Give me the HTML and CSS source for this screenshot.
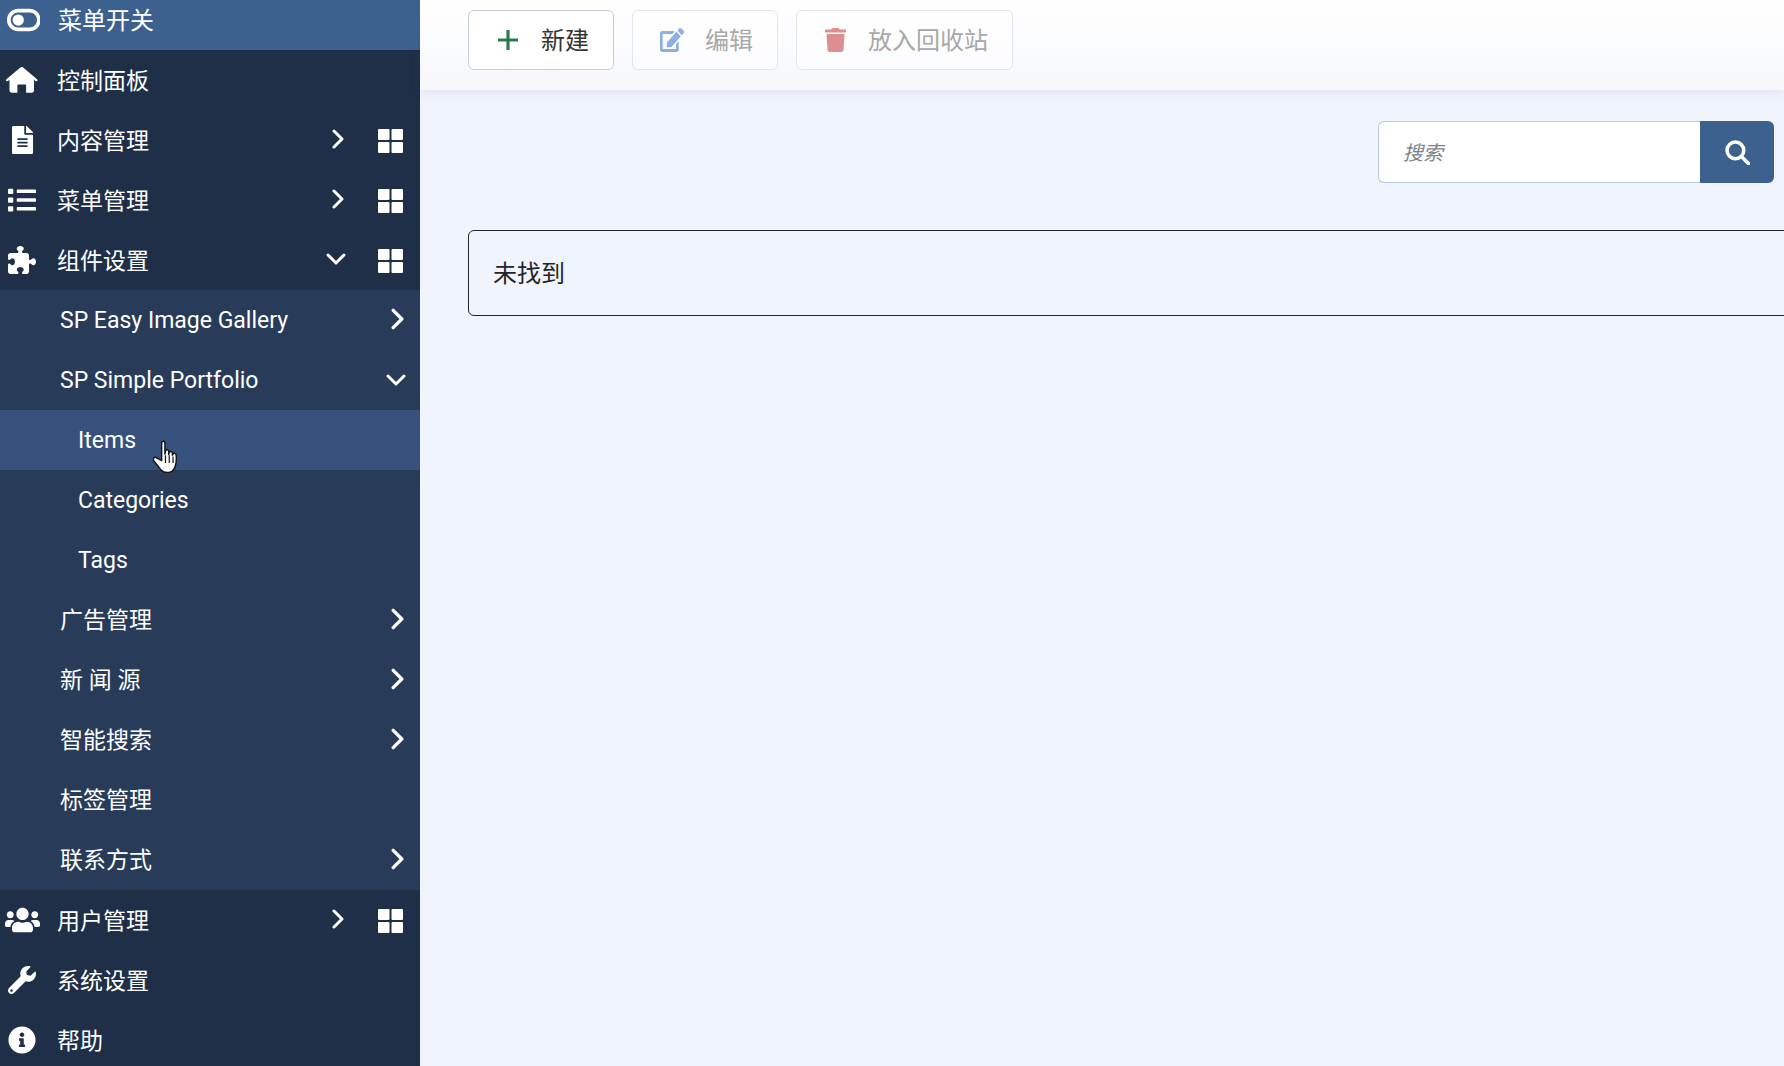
FILE: index.html
```html
<!DOCTYPE html>
<html lang="zh-CN">
<head>
    <meta charset="UTF-8">
    <meta name="viewport" content="width=device-width, initial-scale=1.0">
    <title>Items</title>
    <link rel="stylesheet" href="styles.css">
</head>
<body>
    <svg class="defs" width="0" height="0">
        <symbol id="i-right" viewBox="0 0 12 20"><path d="M2 2l8 8-8 8" fill="none" stroke="currentColor" stroke-width="3" stroke-linecap="round" stroke-linejoin="round"/></symbol>
        <symbol id="i-down" viewBox="0 0 20 12"><path d="M2 2l8 8 8-8" fill="none" stroke="currentColor" stroke-width="3" stroke-linecap="round" stroke-linejoin="round"/></symbol>
        <symbol id="i-grid" viewBox="0 0 25 24"><rect width="11.5" height="11" rx="1"/><rect x="13.5" width="11.5" height="11" rx="1"/><rect y="13" width="11.5" height="11" rx="1"/><rect x="13.5" y="13" width="11.5" height="11" rx="1"/></symbol>
    </svg>

    <div class="layout">
        <nav class="sidebar">
            <div class="nav-row nav-toggle">
                <span class="nav-icon"><svg viewBox="0 0 576 512" class="toggle-icon"><path fill-rule="evenodd" d="M384 64H192C86 64 0 150 0 256s86 192 192 192h192c106 0 192-86 192-192S490 64 384 64zm0 320H192c-70.700 0-128-57.300-128-128s57.300-128 128-128h192c70.700 0 128 57.300 128 128s-57.300 128-128 128zM192 160a96 96 0 1 0 0 192 96 96 0 0 0 0-192z"/></svg></span>
                <span class="nav-text">菜单开关</span>
            </div>
            <div class="nav-row">
                <span class="nav-icon"><svg viewBox="0 0 576 512"><path d="M288 16c-8 0-14 3-20 8L8 244c-10 9-10 22-2 30 8 9 20 9 30 2l28-24v196c0 22 18 40 40 40h104V352c0-9 7-16 16-16h128c9 0 16 7 16 16v136h104c22 0 40-18 40-40V252l28 24c10 7 22 7 30-2 8-8 8-21-2-30L308 24c-6-5-12-8-20-8z"/></svg></span>
                <span class="nav-text">控制面板</span>
            </div>
            <div class="nav-row">
                <span class="nav-icon"><svg viewBox="0 0 384 512"><path d="M224 136V0H24C10.700 0 0 10.700 0 24v464c0 13.300 10.700 24 24 24h336c13.300 0 24-10.700 24-24V160H248c-13.200 0-24-10.800-24-24zm64 236c0 6.600-5.400 12-12 12H108c-6.600 0-12-5.400-12-12v-8c0-6.600 5.400-12 12-12h168c6.600 0 12 5.400 12 12v8zm0-64c0 6.600-5.400 12-12 12H108c-6.600 0-12-5.400-12-12v-8c0-6.600 5.400-12 12-12h168c6.600 0 12 5.400 12 12v8zm0-72v8c0 6.600-5.400 12-12 12H108c-6.600 0-12-5.400-12-12v-8c0-6.600 5.400-12 12-12h168c6.600 0 12 5.400 12 12zm96-114.100v6.100H256V0h6.100c6.400 0 12.500 2.500 17 7l97.900 98c4.500 4.500 7 10.600 7 16.900z"/></svg></span>
                <span class="nav-text">内容管理</span>
                <svg class="chev-right"><use href="#i-right"/></svg>
                <svg class="grid-icon"><use href="#i-grid"/></svg>
            </div>
            <div class="nav-row">
                <span class="nav-icon"><svg viewBox="0 0 512 512"><path d="M80 368H16a16 16 0 0 0-16 16v64a16 16 0 0 0 16 16h64a16 16 0 0 0 16-16v-64a16 16 0 0 0-16-16zm0-320H16A16 16 0 0 0 0 64v64a16 16 0 0 0 16 16h64a16 16 0 0 0 16-16V64a16 16 0 0 0-16-16zm0 160H16a16 16 0 0 0-16 16v64a16 16 0 0 0 16 16h64a16 16 0 0 0 16-16v-64a16 16 0 0 0-16-16zm416 176H176a16 16 0 0 0-16 16v32a16 16 0 0 0 16 16h320a16 16 0 0 0 16-16v-32a16 16 0 0 0-16-16zm0-320H176a16 16 0 0 0-16 16v32a16 16 0 0 0 16 16h320a16 16 0 0 0 16-16V80a16 16 0 0 0-16-16zm0 160H176a16 16 0 0 0-16 16v32a16 16 0 0 0 16 16h320a16 16 0 0 0 16-16v-32a16 16 0 0 0-16-16z"/></svg></span>
                <span class="nav-text">菜单管理</span>
                <svg class="chev-right"><use href="#i-right"/></svg>
                <svg class="grid-icon"><use href="#i-grid"/></svg>
            </div>
            <div class="nav-row">
                <span class="nav-icon"><svg viewBox="0 0 512 512"><path d="M192 104.800c0-9.200-5.800-17.300-13.200-22.800C167.200 73.300 160 61.300 160 48c0-26.500 28.700-48 64-48s64 21.500 64 48c0 13.300-7.200 25.300-18.800 34c-7.400 5.500-13.200 13.600-13.200 22.800c0 12.800 10.400 23.200 23.200 23.200H336c26.500 0 48 21.500 48 48v56.800c0 12.800 10.400 23.200 23.200 23.200c9.200 0 17.300-5.800 22.800-13.200c8.700-11.600 20.700-18.800 34-18.800c26.500 0 48 28.700 48 64s-21.500 64-48 64c-13.300 0-25.300-7.200-34-18.800c-5.500-7.400-13.600-13.200-22.800-13.200c-12.800 0-23.200 10.400-23.200 23.200V464c0 26.500-21.500 48-48 48H279.200c-12.800 0-23.200-10.400-23.200-23.200c0-9.200 5.800-17.300 13.200-22.800c11.600-8.700 18.800-20.700 18.800-34c0-26.500-28.700-48-64-48s-64 21.500-64 48c0 13.300 7.200 25.300 18.800 34c7.400 5.500 13.200 13.600 13.200 22.800c0 12.800-10.400 23.200-23.200 23.200H48c-26.500 0-48-21.500-48-48V343.200C0 330.400 10.400 320 23.200 320c9.200 0 17.300 5.800 22.800 13.200C54.700 344.800 66.700 352 80 352c26.500 0 48-28.700 48-64s-21.500-64-48-64c-13.300 0-25.300 7.200-34 18.800C40.500 250.200 32.400 256 23.200 256C10.400 256 0 245.600 0 232.800V176c0-26.500 21.500-48 48-48H168.800c12.800 0 23.200-10.400 23.200-23.200z"/></svg></span>
                <span class="nav-text">组件设置</span>
                <svg class="chev-down"><use href="#i-down"/></svg>
                <svg class="grid-icon"><use href="#i-grid"/></svg>
            </div>

            <div class="subnav">
                <div class="sub-row"><span class="nav-text">SP Easy Image Gallery</span><svg class="chev-right"><use href="#i-right"/></svg></div>
                <div class="sub-row"><span class="nav-text">SP Simple Portfolio</span><svg class="chev-down"><use href="#i-down"/></svg></div>
                <div class="sub-row sub-deep active">
                    <span class="nav-text">Items</span>
                    <svg class="hand-cursor" viewBox="0 0 24 32"><path d="M8 2.500c0-2 3-2 3 0v10.500l.5-3c.5-1.500 2.800-1.300 3 .3v3l.5-2c.6-1.300 2.700-1 2.900.5l.1 2.200.5-1.200c.7-1.200 2.600-.8 2.800.7.400 3.500.2 7.500-.8 10.500-.8 2.500-2.500 5-5 5.500-3 .6-6 .2-8-2-2-2.500-5-6-7-9-1-1.600.8-3.400 2.500-2.300L8 19z" fill="#fff" stroke="#111" stroke-width="1.300" stroke-linejoin="round"/><path d="M11.500 14v7M15 14v7M18.500 15v6" stroke="#111" stroke-width="1.100" fill="none"/></svg>
                </div>
                <div class="sub-row sub-deep"><span class="nav-text">Categories</span></div>
                <div class="sub-row sub-deep"><span class="nav-text">Tags</span></div>
                <div class="sub-row"><span class="nav-text">广告管理</span><svg class="chev-right"><use href="#i-right"/></svg></div>
                <div class="sub-row"><span class="nav-text">新 闻 源</span><svg class="chev-right"><use href="#i-right"/></svg></div>
                <div class="sub-row"><span class="nav-text">智能搜索</span><svg class="chev-right"><use href="#i-right"/></svg></div>
                <div class="sub-row"><span class="nav-text">标签管理</span></div>
                <div class="sub-row"><span class="nav-text">联系方式</span><svg class="chev-right"><use href="#i-right"/></svg></div>
            </div>

            <div class="nav-row">
                <span class="nav-icon"><svg viewBox="0 0 640 512"><path d="M96 224c35.300 0 64-28.700 64-64s-28.700-64-64-64-64 28.700-64 64 28.700 64 64 64zm448 0c35.300 0 64-28.700 64-64s-28.700-64-64-64-64 28.700-64 64 28.700 64 64 64zm32 32h-64c-17.600 0-33.500 7.100-45.100 18.600 40.300 22.100 68.900 62 75.100 109.400h66c17.700 0 32-14.300 32-32v-32c0-35.300-28.700-64-64-64zm-256 0c61.900 0 112-50.100 112-112S381.900 32 320 32 208 82.100 208 144s50.100 112 112 112zm76.800 32h-8.300c-20.800 10-43.900 16-68.500 16s-47.600-6-68.500-16h-8.300C179.600 288 128 339.600 128 403.200V432c0 26.500 21.500 48 48 48h288c26.500 0 48-21.500 48-48v-28.800c0-63.600-51.600-115.200-115.200-115.200zm-223.700-13.400C161.500 263.100 145.600 256 128 256H64c-35.300 0-64 28.700-64 64v32c0 17.700 14.300 32 32 32h65.900c6.300-47.400 34.900-87.300 75.200-109.400z"/></svg></span>
                <span class="nav-text">用户管理</span>
                <svg class="chev-right"><use href="#i-right"/></svg>
                <svg class="grid-icon"><use href="#i-grid"/></svg>
            </div>
            <div class="nav-row">
                <span class="nav-icon"><svg viewBox="0 0 512 512"><path d="M507.730 109.100c-2.240-9.030-13.540-12.090-20.120-5.510l-74.360 74.360-67.880-11.310-11.310-67.880 74.360-74.360c6.620-6.620 3.430-17.900-5.660-20.160-47.380-11.740-99.550.91-136.580 37.930-39.640 39.640-50.550 97.100-34.050 147.200L18.740 402.760c-24.990 24.990-24.990 65.510 0 90.500 24.990 24.990 65.510 24.990 90.500 0l213.210-213.210c50.120 16.710 107.470 5.680 147.370-34.220 37.070-37.070 49.700-89.320 37.910-136.730zM64 472c-13.250 0-24-10.750-24-24 0-13.260 10.750-24 24-24s24 10.740 24 24c0 13.250-10.750 24-24 24z"/></svg></span>
                <span class="nav-text">系统设置</span>
            </div>
            <div class="nav-row">
                <span class="nav-icon"><svg viewBox="0 0 512 512"><path d="M256 8C119.043 8 8 119.083 8 256c0 136.997 111.043 248 248 248s248-111.003 248-248C504 119.083 392.957 8 256 8zm0 110c23.196 0 42 18.804 42 42s-18.804 42-42 42-42-18.804-42-42 18.804-42 42-42zm56 254c0 6.627-5.373 12-12 12h-88c-6.627 0-12-5.373-12-12v-24c0-6.627 5.373-12 12-12h12v-64h-12c-6.627 0-12-5.373-12-12v-24c0-6.627 5.373-12 12-12h64c6.627 0 12 5.373 12 12v100h12c6.627 0 12 5.373 12 12v24z"/></svg></span>
                <span class="nav-text">帮助</span>
            </div>
        </nav>

        <main class="main">
            <div class="toolbar">
                <button class="btn btn-new">
                    <svg class="btn-icon icon-plus" viewBox="0 0 20 20"><path d="M10 0v20M0 10h20" stroke="currentColor" stroke-width="3.200" fill="none"/></svg>
                    <span>新建</span>
                </button>
                <button class="btn btn-off">
                    <svg class="btn-icon icon-edit" viewBox="0 0 576 512" preserveAspectRatio="none"><path d="M402.600 83.200l90.200 90.200c3.800 3.800 3.800 10 0 13.800L274.400 405.600l-92.800 10.300c-12.400 1.400-22.900-9.100-21.500-21.500l10.300-92.800L388.800 83.200c3.800-3.800 10-3.800 13.800 0zm162-22.900l-48.800-48.800c-15.200-15.200-39.900-15.200-55.200 0l-35.400 35.400c-3.800 3.800-3.800 10 0 13.800l90.200 90.200c3.800 3.800 10 3.800 13.800 0l35.400-35.400c15.200-15.300 15.200-40 0-55.200zM384 346.200V448H64V128h229.800c3.200 0 6.200-1.300 8.500-3.500l40-40c7.600-7.600 2.200-20.500-8.500-20.500H48C21.500 64 0 85.500 0 112v352c0 26.500 21.500 48 48 48h352c26.500 0 48-21.500 48-48V306.200c0-10.700-12.900-16-20.500-8.500l-40 40c-2.200 2.300-3.500 5.300-3.500 8.500z"/></svg>
                    <span>编辑</span>
                </button>
                <button class="btn btn-off">
                    <svg class="btn-icon icon-trash" viewBox="0 0 448 512"><path d="M432 32H312l-9.400-18.700A24 24 0 0 0 281.100 0H166.800a23.720 23.720 0 0 0-21.400 13.300L136 32H16A16 16 0 0 0 0 48v32a16 16 0 0 0 16 16h416a16 16 0 0 0 16-16V48a16 16 0 0 0-16-16zM53.200 467a48 48 0 0 0 47.900 45h245.800a48 48 0 0 0 47.900-45L416 128H32z"/></svg>
                    <span>放入回收站</span>
                </button>
            </div>

            <div class="content">
                <div class="search-row">
                    <div class="search-box">
                        <div class="search-input">搜索</div>
                        <button class="search-btn"><svg viewBox="0 0 24 24"><circle cx="10" cy="10" r="8" fill="none" stroke="#fff" stroke-width="3.400"/><path d="M16 16l6.500 6.500" stroke="#fff" stroke-width="3.400" stroke-linecap="round"/></svg></button>
                    </div>
                </div>
                <div class="alert">未找到</div>
            </div>
        </main>
    </div>
</body>
</html>
```

FILE: styles.css
```css
* { margin: 0; padding: 0; box-sizing: border-box; }
html, body { height: 100%; overflow: hidden; }
body { font-family: Roboto, "Noto Sans CJK SC", sans-serif; font-size: 24px; background: #f0f4fc; color: #22262a; }
.defs { position: absolute; }
.layout { display: flex; height: 1066px; }

.sidebar { width: 420px; flex-shrink: 0; background: #1f2f48; color: #fff; font-size: 23px; }
.nav-row { display: flex; align-items: center; height: 60px; padding-right: 17px; }
.nav-toggle { height: 50px; padding-bottom: 10px; background: #3c618f; }
.nav-toggle .nav-text { margin-left: 1px; font-size: 24px; }
.nav-icon { display: flex; justify-content: center; width: 44px; margin-right: 13px; flex-shrink: 0; }
.nav-icon svg { height: 28px; fill: #fff; display: block; }
.nav-icon .toggle-icon { height: 30px; margin-left: 3px; }
.nav-text { flex: 1; line-height: 1; padding-top: 2px; }
.chev-right { width: 12px; height: 20px; margin-top: -2px; color: #fff; }
.chev-down { width: 20px; height: 12px; color: #fff; }
.grid-icon { width: 25px; height: 24px; fill: #fff; margin: 2px 0 0 34px; }
.nav-row .chev-down { margin: -2px -2px 0 -4px; }

.subnav { background: #283c5a; }
.sub-row { position: relative; display: flex; align-items: center; height: 60px; padding: 0 16px 0 60px; }
.sub-row .nav-text { padding-top: 0; }
.sub-row .chev-right { width: 13px; height: 22px; }
.sub-row .chev-down { margin-right: -2px; }
.sub-deep { padding-left: 78px; }
.active { background: #36527c; }
.hand-cursor { position: absolute; left: 153px; top: 30px; width: 26px; height: 35px; }

.main { flex: 1; min-width: 0; }
.toolbar { display: flex; gap: 18px; height: 90px; padding: 10px 0 0 48px; background: linear-gradient(#fff, #f5f7fb); box-shadow: 0 2px 10px rgba(60, 90, 140, 0.1); }
.btn { display: flex; align-items: center; height: 60px; padding: 0 24px 3px 29px; font: inherit; color: #333; background: #fff; border: 1px solid #c4ccda; border-radius: 6px; }
.btn-icon { height: 24px; fill: currentColor; flex-shrink: 0; margin-top: 3px; }
.icon-plus { width: 20px; height: 20px; margin-right: 23px; color: #2f7a52; }
.btn-off { color: #a8a8a8; background: rgba(255, 255, 255, 0.5); border-color: #e2e5ed; padding-left: 27px; }
.icon-edit { width: 24px; margin-right: 21px; color: #8db0e0; }
.icon-trash { width: 21px; margin: 3px 22px 0 1px; color: #de8e8f; }

.content { padding: 31px 10px 0 48px; }
.search-row { display: flex; justify-content: flex-end; }
.search-box { display: flex; width: 396px; height: 62px; }
.search-input { flex: 1; padding-left: 24px; line-height: 62px; font-size: 20px; font-style: italic; color: #7a838b; background: #fff; border: 1px solid #b8c8de; border-right: none; border-radius: 6px 0 0 6px; }
.search-btn { display: flex; align-items: center; justify-content: center; width: 74px; background: #3c618f; border: none; border-radius: 0 6px 6px 0; }
.search-btn svg { width: 25px; height: 25px; }
.alert { width: 1500px; height: 86px; margin-top: 47px; padding: 0 24px; line-height: 86px; border: 1px solid #22262a; border-radius: 6px; }
```
